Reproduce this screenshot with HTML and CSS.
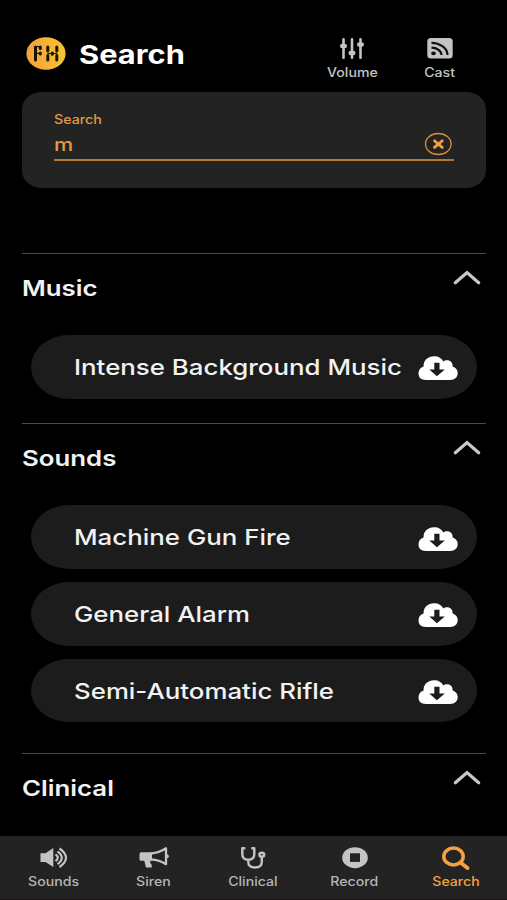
FILE: index.html
```html
<!DOCTYPE html>
<html lang="en">
<head>
<meta charset="utf-8">
<title>Search</title>
<link rel="stylesheet" href="styles.css">
</head>
<body>
<svg class="defs" aria-hidden="true">
  <symbol id="cloud" viewBox="0 0 40 24"><path fill="#fff" d="M8 24C3 24 0.500 21.200 0.500 17.500C0.500 14 2.400 11.400 5.600 10.600C5.200 4.500 10 0.300 16 0.300C20.500 0.300 23.800 2.300 25.200 5.500C26.300 4.600 27.500 4.200 29 4.200C32.500 4.200 35 6.800 34.600 10.400C37.800 11.200 39.700 13.800 39.700 17C39.700 21 37 24 32 24Z"/><path fill="#1c1c1c" d="M16.300 6.800h5.200v6.800h5.300L18.900 20.200 11.300 13.600h5z"/></symbol>
  <symbol id="chevron" viewBox="0 0 28 15"><path fill="none" stroke="#c9c9c9" stroke-width="3.200" stroke-linecap="round" d="M2.300 12.700L14 2.600L25.700 12.700"/></symbol>
</svg>
<div class="app">
  <header class="header">
    <svg class="logo" viewBox="0 0 40 33">
      <defs><linearGradient id="gold"><stop offset="0" stop-color="#f5a13c"/><stop offset="1" stop-color="#f7c42f"/></linearGradient></defs>
      <ellipse cx="20" cy="16.500" rx="19.600" ry="16.300" fill="url(#gold)"/>
      <g stroke="#17120a" stroke-width="3" stroke-linecap="round"><path d="M9.500 10v13M14.300 10v1.400M14.300 16v1M21.800 10v4M21.800 18.500v4.500M26.300 16v1.200M30.800 10v4M30.800 18.500v4.500"/><path stroke-width="1.200" d="M9.700 9.700h4M9.700 16.300h4M21.800 16.500h9"/></g>
    </svg>
    <h1 class="title"><span class="wide">Search</span></h1>
    <div class="action volume">
      <svg width="24" height="22" viewBox="0 0 24 22"><g stroke="#c4c4c4" stroke-width="2.600" stroke-linecap="round"><path d="M3.500 2.300v18.400M12 2.300v18.400M20.500 2.300v18.400"/><path stroke-width="4.600" d="M2.300 9h2.400M10.800 16h2.400M19.300 7.500h2.400"/></g></svg>
      <span class="wide">Volume</span>
    </div>
    <div class="action cast">
      <svg width="26" height="22" viewBox="0 0 26 22"><rect x=".3" y="1" width="25.400" height="20.500" rx="3.500" fill="#c4c4c4"/><g fill="none" stroke="#111" stroke-width="2.200"><path d="M4.500 5.800C13 5.800 20.500 11.500 20.500 18M4.500 10.700C10 10.700 14.500 14 14.500 18"/></g><ellipse cx="6.500" cy="16.300" rx="2.300" ry="1.900" fill="#111"/></svg>
      <span class="wide">Cast</span>
    </div>
  </header>
  <section class="search-card">
    <div class="field">
      <div class="field-label"><span class="wide">Search</span></div>
      <div class="field-row">
        <span class="wide field-value">m</span>
        <svg width="28" height="24" viewBox="0 0 28 24"><ellipse cx="14.300" cy="12" rx="12.800" ry="10.500" fill="none" stroke="#d78e35" stroke-width="1.300"/><path d="M10.500 8.800l7.800 6.600M18.300 8.800L10.500 15.400" stroke="#f2a240" stroke-width="2.800" stroke-linecap="round"/></svg>
      </div>
    </div>
  </section>
  <main class="results">
    <section class="group">
      <div class="group-head"><h2><span class="wide">Music</span></h2><svg class="chevron"><use href="#chevron"/></svg></div>
      <div class="list">
        <div class="item"><span class="wide">Intense Background Music</span><svg class="cloud"><use href="#cloud"/></svg></div>
      </div>
    </section>
    <section class="group sounds">
      <div class="group-head"><h2><span class="wide">Sounds</span></h2><svg class="chevron"><use href="#chevron"/></svg></div>
      <div class="list">
        <div class="item"><span class="wide">Machine Gun Fire</span><svg class="cloud"><use href="#cloud"/></svg></div>
        <div class="item"><span class="wide">General Alarm</span><svg class="cloud"><use href="#cloud"/></svg></div>
        <div class="item"><span class="wide">Semi-Automatic Rifle</span><svg class="cloud"><use href="#cloud"/></svg></div>
      </div>
    </section>
    <section class="group">
      <div class="group-head"><h2><span class="wide">Clinical</span></h2><svg class="chevron"><use href="#chevron"/></svg></div>
    </section>
  </main>
  <nav class="tabs">
    <div class="tab"><svg viewBox="0 0 30 22"><path fill="#c4c4c4" d="M1.500 6.300h5L14.300 1v19L6.500 15h-5z"/><g fill="none" stroke="#c4c4c4" stroke-width="2.200"><path d="M16.500 7.300q4.600 3.300 0 6.800M18.500 4.300q8.600 6.300 0 12.800M20.500 1.500q13 9.200 0 18.500"/></g></svg><span class="wide">Sounds</span></div>
    <div class="tab"><svg viewBox="0 0 30 22"><path fill="#c4c4c4" d="M.5 6.800q0-1.500 1.700-1.500H13v8.400h-1.600q-1 2 1.300 4v2.800H7L5.300 13.700H2.200q-1.700 0-1.700-1.500z"/><path fill="none" stroke="#c4c4c4" stroke-width="2.300" stroke-linejoin="round" d="M12 6.500Q20 6 27 1.300V17.200Q20 12.700 12 12.300"/><ellipse cx="28.200" cy="9.200" rx="1.600" ry="1.900" fill="#c4c4c4"/></svg><span class="wide">Siren</span></div>
    <div class="tab"><svg viewBox="0 0 30 22"><g fill="none" stroke="#c4c4c4" stroke-width="2.400" stroke-linecap="round" stroke-linejoin="round"><path d="M6.300 1.300H4.300V7Q4.300 12.700 10.300 12.700T16.300 7V1.300H14.300M10.300 13v2Q10.300 20.500 17 20.500T23.800 15V10"/><ellipse cx="23.800" cy="7.800" rx="2.400" ry="2"/></g></svg><span class="wide">Clinical</span></div>
    <div class="tab"><svg viewBox="0 0 30 22"><ellipse cx="15" cy="10.700" rx="12.800" ry="10.500" fill="#c4c4c4"/><rect x="10" y="6.300" width="10" height="8.600" fill="#232323"/></svg><span class="wide">Record</span></div>
    <div class="tab active"><svg viewBox="0 0 30 22"><ellipse cx="12.500" cy="9.500" rx="9.700" ry="8.400" fill="none" stroke="#f2a240" stroke-width="3.500"/><path d="M20 16l6.500 5" stroke="#f2a240" stroke-width="4" stroke-linecap="round"/></svg><span class="wide">Search</span></div>
  </nav>
</div>
</body>
</html>
```
FILE: styles.css
```css
* { box-sizing: border-box; }
body { margin: 0; background: #000; font-family: Inter, "Liberation Sans", sans-serif; color: #f2f2f2; }
svg { display: block; flex: none; overflow: visible; }
h1, h2 { margin: 0; }
.defs { display: none; }
.app { width: 507px; height: 900px; display: flex; flex-direction: column; overflow: hidden; }
.wide { display: inline-block; white-space: nowrap; transform: scaleX(1.2); transform-origin: left center; }
.header { height: 92px; display: flex; align-items: flex-start; padding-left: 26px; flex: none; }
.logo { width: 40px; height: 33px; margin-top: 37px; }
.title { width: 234px; margin: 38px 0 0 13px; font-size: 26px; line-height: 33px; font-weight: 700; color: #fff; }
.title .wide { transform: scaleX(1.185); }
.action { width: 78px; margin-top: 37px; display: flex; flex-direction: column; align-items: center; gap: 6px; font-size: 12.500px; line-height: 16px; font-weight: 500; color: #c4c4c4; }
.action .wide, .tab .wide { transform: scaleX(1.13); transform-origin: center; }
.cast { margin-left: 10px; }
.search-card { height: 96px; margin: 0 21px 0 22px; flex: none; padding: 20px 32px 0; background: #232323; border-radius: 20px / 17px; }
.field { height: 49px; border-bottom: 2px solid #b07a34; color: #e29a43; }
.field-label { font-size: 12.500px; line-height: 16px; font-weight: 500; }
.field-label .wide { transform: scaleX(1.14); }
.field-row { display: flex; justify-content: space-between; align-items: center; height: 32px; }
.field-row svg { margin-right: 2px; }
.field-value { font-size: 18px; font-weight: 500; }
.results { flex: 1; min-height: 0; padding: 65px 21px 0 22px; overflow: hidden; }
.group { height: 170.400px; border-top: 1px solid #4a4a4a; }
.sounds { height: 330px; }
.group-head { display: flex; justify-content: space-between; height: 81px; padding: 16px 5px 0 0; }
h2 { font-size: 21.500px; line-height: 36px; font-weight: 600; }
.chevron { width: 28px; height: 15px; }
.list { display: flex; flex-direction: column; gap: 13.100px; padding: 0 9px; }
.item { height: 63.600px; display: flex; align-items: center; justify-content: space-between; padding: 0 19px 0 43px; background: #1c1c1c; border-radius: 38px / 32px; font-size: 22px; font-weight: 500; }
.item .wide { transform: scaleX(1.175); }
.cloud { width: 40px; height: 24px; margin-top: 3px; }
.tabs { height: 64px; flex: none; display: grid; grid-template-columns: 100px 100px 98px 106px 97px; padding: 11px 0 0 3.500px; background: #232323; border-bottom: 1px solid #1f1319; }
.tab { display: flex; flex-direction: column; align-items: center; gap: 5px; font-size: 12.500px; line-height: 16px; font-weight: 500; color: #b5b5b5; }
.tab svg { width: 30px; height: 22px; }
.tab.active { color: #f2a240; }
```
